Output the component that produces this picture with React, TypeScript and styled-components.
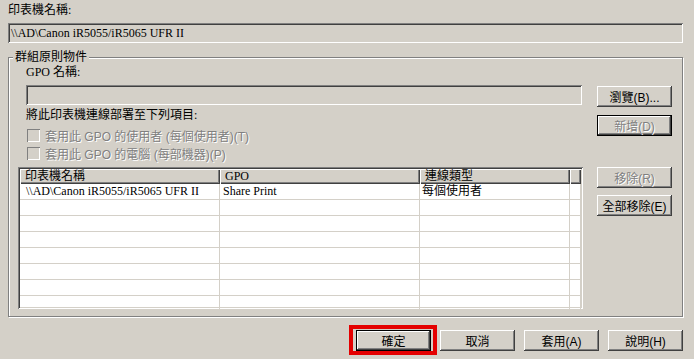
import React from "react";
import styled, { createGlobalStyle, css } from "styled-components";

const SERIF = `"Liberation Serif", "Noto Sans CJK TC", serif`;
const SANS = `"Liberation Sans", "Noto Sans CJK TC", sans-serif`;
const FACE = "#d4d0c8";

const GlobalStyle = createGlobalStyle`
  html, body { margin: 0; padding: 0; background: ${FACE}; }
  body { font-family: ${SERIF}; font-size: 12px; color: #000; }
  * { box-sizing: border-box; }
`;

const Dialog = styled.div`
  width: 694px;
  height: 359px;
  padding: 3px 11px 0 8px;
  display: flex;
  flex-direction: column;
  background: ${FACE};
  overflow: hidden;
`;

const Label = styled.div<{ $indent?: number; $mt?: number }>`
  height: 14px;
  line-height: 14px;
  margin-left: ${(p) => p.$indent ?? 0}px;
  margin-top: ${(p) => p.$mt ?? 0}px;
  white-space: nowrap;
  font-family: ${SERIF};
`;

const sunken = css`
  box-shadow: inset 1px 1px #808080, inset -1px -1px #ffffff,
    inset 2px 2px #404040, inset -2px -2px ${FACE};
`;

const Field = styled.div<{ $mt: number; $indent?: number; $right?: number }>`
  height: 20px;
  margin-top: ${(p) => p.$mt}px;
  margin-left: ${(p) => p.$indent ?? 0}px;
  margin-right: ${(p) => p.$right ?? 0}px;
  padding: 0 3px;
  display: flex;
  align-items: center;
  background: ${FACE};
  ${sunken};
  white-space: nowrap;
  font-family: ${SERIF};
`;

const Group = styled.div`
  margin-top: 14px;
  border: 1px solid #808080;
  box-shadow: inset 1px 1px #ffffff, 1px 1px 0 #ffffff;
  padding: 0 10px 7px 9px;
  display: flex;
  flex-direction: column;
`;

const GroupTitle = styled.div`
  align-self: flex-start;
  margin: -8px 0 0 -5px;
  padding: 0 2px;
  height: 15px;
  line-height: 15px;
  background: ${FACE};
  font-family: ${SERIF};
`;

const GroupBody = styled.div`
  display: grid;
  grid-template-columns: 1fr 75px;
  column-gap: 14px;
`;

const Column = styled.div`
  display: flex;
  flex-direction: column;
  min-width: 0;
`;

const Button = styled.button<{ $mt?: number; $isDefault?: boolean }>`
  width: 75px;
  height: 21px;
  margin: ${(p) => p.$mt ?? 0}px 0 0 0;
  padding: 0;
  border: none;
  background: ${FACE};
  font-family: ${SANS};
  font-size: 12px;
  color: #000;
  flex: none;
  box-shadow: inset -1px -1px #404040, inset 1px 1px #ffffff,
    inset -2px -2px #808080, inset 2px 2px ${FACE};
  ${(p) =>
    p.$isDefault &&
    css`
      border: 1px solid #000;
      box-shadow: inset -1px -1px #404040, inset 1px 1px #ffffff,
        inset -2px -2px #808080;
    `}
  &:disabled {
    color: #808080;
    text-shadow: 1px 1px 0 #ffffff;
  }
`;

const CheckRow = styled.div<{ $mt: number }>`
  display: flex;
  align-items: center;
  gap: 5px;
  height: 16px;
  margin: ${(p) => p.$mt}px 0 0 9px;
  font-family: ${SANS};
  color: #808080;
  text-shadow: 1px 1px 0 #ffffff;
  white-space: nowrap;
`;

const CheckBox = styled.span`
  width: 13px;
  height: 13px;
  flex: none;
  background: ${FACE};
  box-shadow: inset 1px 1px #808080, inset -1px -1px #ffffff;
`;

const ListView = styled.div`
  margin-top: 6px;
  height: 142px;
  padding: 2px;
  background: #ffffff;
  ${sunken};
  overflow: hidden;
  display: flex;
  flex-direction: column;
`;

const HeaderRow = styled.div`
  display: flex;
  height: 15px;
  flex: none;
`;

const HeaderCell = styled.div<{ $w?: number }>`
  ${(p) => (p.$w ? css`width: ${p.$w}px;` : css`flex: 1;`)}
  flex-shrink: 0;
  height: 15px;
  line-height: 15px;
  padding-left: 5px;
  background: ${FACE};
  box-shadow: inset 1px 1px #ffffff, inset -1px -1px #404040,
    inset -2px -2px #808080;
  white-space: nowrap;
  overflow: hidden;
  font-family: ${SERIF};
`;

const Row = styled.div`
  display: flex;
  height: 16px;
  flex: none;
`;

const Cell = styled.div<{ $w?: number; $pad: number }>`
  ${(p) => (p.$w ? css`width: ${p.$w}px;` : css`flex: 1;`)}
  flex-shrink: 0;
  height: 16px;
  line-height: 15px;
  padding-left: ${(p) => p.$pad}px;
  border-right: 1px solid ${FACE};
  border-bottom: 1px solid ${FACE};
  white-space: nowrap;
  overflow: hidden;
  font-family: ${SERIF};
`;

const Footer = styled.div`
  display: flex;
  justify-content: flex-end;
  gap: 9px;
  margin-top: 13px;
`;

const Highlight = styled.div`
  position: relative;
  display: flex;
  &::after {
    content: "";
    position: absolute;
    left: -7px;
    right: -6px;
    top: -5px;
    bottom: -4px;
    border: 4px solid #e40000;
    pointer-events: none;
  }
`;

const COLS = [200, 200, 150];
const PRINTER = "\\\\AD\\Canon iR5055/iR5065 UFR II";
const rows: string[][] = [
  [PRINTER, "Share Print", "每個使用者"],
  ["", "", ""],
  ["", "", ""],
  ["", "", ""],
  ["", "", ""],
  ["", "", ""],
  ["", "", ""],
  ["", "", ""],
];

export default function App() {
  return (
    <>
      <GlobalStyle />
      <Dialog>
        <Label>印表機名稱:</Label>
        <Field $mt={6}>{PRINTER}</Field>
        <Group>
          <GroupTitle>群組原則物件</GroupTitle>
          <GroupBody>
            <Column>
              <Label $indent={8}>GPO 名稱:</Label>
              <Field $mt={6} $indent={8} $right={1} />
              <Label $indent={8} $mt={3}>
                將此印表機連線部署至下列項目:
              </Label>
              <CheckRow $mt={5}>
                <CheckBox />
                套用此 GPO 的使用者 (每個使用者)(T)
              </CheckRow>
              <CheckRow $mt={2}>
                <CheckBox />
                套用此 GPO 的電腦 (每部機器)(P)
              </CheckRow>
              <ListView>
                <HeaderRow>
                  <HeaderCell $w={COLS[0]}>印表機名稱</HeaderCell>
                  <HeaderCell $w={COLS[1]}>GPO</HeaderCell>
                  <HeaderCell $w={COLS[2]}>連線類型</HeaderCell>
                  <HeaderCell />
                </HeaderRow>
                {rows.map((r, i) => (
                  <Row key={i}>
                    <Cell $w={COLS[0]} $pad={6}>{r[0]}</Cell>
                    <Cell $w={COLS[1]} $pad={3}>{r[1]}</Cell>
                    <Cell $w={COLS[2]} $pad={2}>{r[2]}</Cell>
                    <Cell $pad={0} />
                  </Row>
                ))}
              </ListView>
            </Column>
            <Column>
              <Button $mt={21}>瀏覽(B)...</Button>
              <Button $mt={8} $isDefault disabled>
                新增(D)
              </Button>
              <Button $mt={31} disabled>
                移除(R)
              </Button>
              <Button $mt={7}>全部移除(E)</Button>
            </Column>
          </GroupBody>
        </Group>
        <Footer>
          <Highlight>
            <Button $isDefault>確定</Button>
          </Highlight>
          <Button>取消</Button>
          <Button>套用(A)</Button>
          <Button>說明(H)</Button>
        </Footer>
      </Dialog>
    </>
  );
}
